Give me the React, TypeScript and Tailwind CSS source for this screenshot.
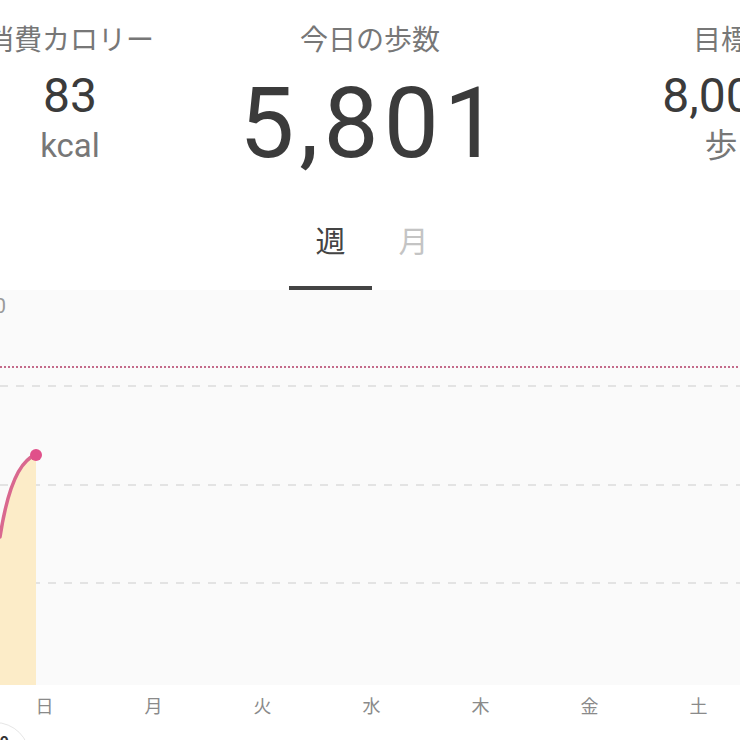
import React from "react";

const days = ["日", "月", "火", "水", "木", "金", "土"];

function SideStat({
  label,
  value,
  unit,
  width,
}: {
  label: string;
  value: string;
  unit: string;
  width: string;
}) {
  return (
    <div className={`${width} flex shrink-0 flex-col items-center pt-[20px] whitespace-nowrap`}>
      <div className="text-[28px] leading-[36px] text-[#777]">{label}</div>
      <div className="mt-[12px] font-['Roboto',sans-serif] text-[48px] leading-[56px] text-[#3b3b3b]">{value}</div>
      <div className="mt-[2px] font-['Roboto','Noto_Sans_CJK_JP',sans-serif] text-[33px] leading-[40px] text-[#777]">
        {unit}
      </div>
    </div>
  );
}

function StepChart() {
  return (
    <svg width="740" height="395" viewBox="0 0 740 395" className="block">
      <text x="6" y="23" textAnchor="end" fontSize="21" fill="#9a9a9a" fontFamily="Roboto, sans-serif">
        10,000
      </text>
      <line x1="0" y1="77" x2="740" y2="77" stroke="#c46a8a" strokeWidth="2" strokeDasharray="2 2" />
      {[96, 195, 293].map((y) => (
        <line key={y} x1="0" y1={y} x2="740" y2={y} stroke="#dcdcdc" strokeWidth="1.5" strokeDasharray="8 8" />
      ))}
      <path d="M0,247 C8,195 20,170 36,165 L36,395 L0,395 Z" fill="#fcecc8" />
      <path d="M0,247 C8,195 20,170 36,165" fill="none" stroke="#d9688f" strokeWidth="3.5" strokeLinecap="round" />
      <circle cx="36" cy="165" r="6" fill="#e0508a" />
    </svg>
  );
}

export default function App() {
  return (
    <div className="relative h-[740px] w-[740px] overflow-hidden bg-white font-['Noto_Sans_CJK_JP','Noto_Sans',sans-serif]">
      <div className="flex h-[200px]">
        <SideStat label="消費カロリー" value="83" unit="kcal" width="w-[140px]" />
        <div className="flex w-[460px] shrink-0 flex-col items-center pt-[20px] whitespace-nowrap">
          <div className="text-[28px] leading-[36px] text-[#777]">今日の歩数</div>
          <div className="mt-[18px] mr-[-3px] font-['Roboto',sans-serif] text-[98px] leading-[100px] tracking-[5px] text-[#3b3b3b]">
            5,801
          </div>
        </div>
        <SideStat label="目標" value="8,000" unit="歩" width="w-[242px]" />
      </div>

      <div className="flex h-[90px] justify-center pl-[4px]">
        <button className="flex w-[83px] flex-col items-center justify-end">
          <span className="mb-[27px] text-[30px] leading-[40px] text-[#444]">週</span>
          <span className="h-[4px] w-full bg-[#444]" />
        </button>
        <button className="flex w-[83px] flex-col items-center justify-end">
          <span className="mb-[31px] text-[30px] leading-[40px] text-[#c4c4c4]">月</span>
        </button>
      </div>

      <div className="bg-[#fafafa]">
        <StepChart />
      </div>

      <div className="ml-[-10px] flex h-[40px] items-center">
        {days.map((d) => (
          <div key={d} className="w-[109px] shrink-0 text-center text-[18px] leading-[24px] text-[#8a8a8a]">
            {d}
          </div>
        ))}
      </div>

      <div className="absolute left-[-40px] top-[722px] flex h-[70px] w-[70px] items-start justify-end rounded-full border border-[#e6e6e6] bg-white pr-[20px] pt-[10px]">
        <span className="text-[16px] font-bold leading-none text-[#333]">0</span>
      </div>
    </div>
  );
}
